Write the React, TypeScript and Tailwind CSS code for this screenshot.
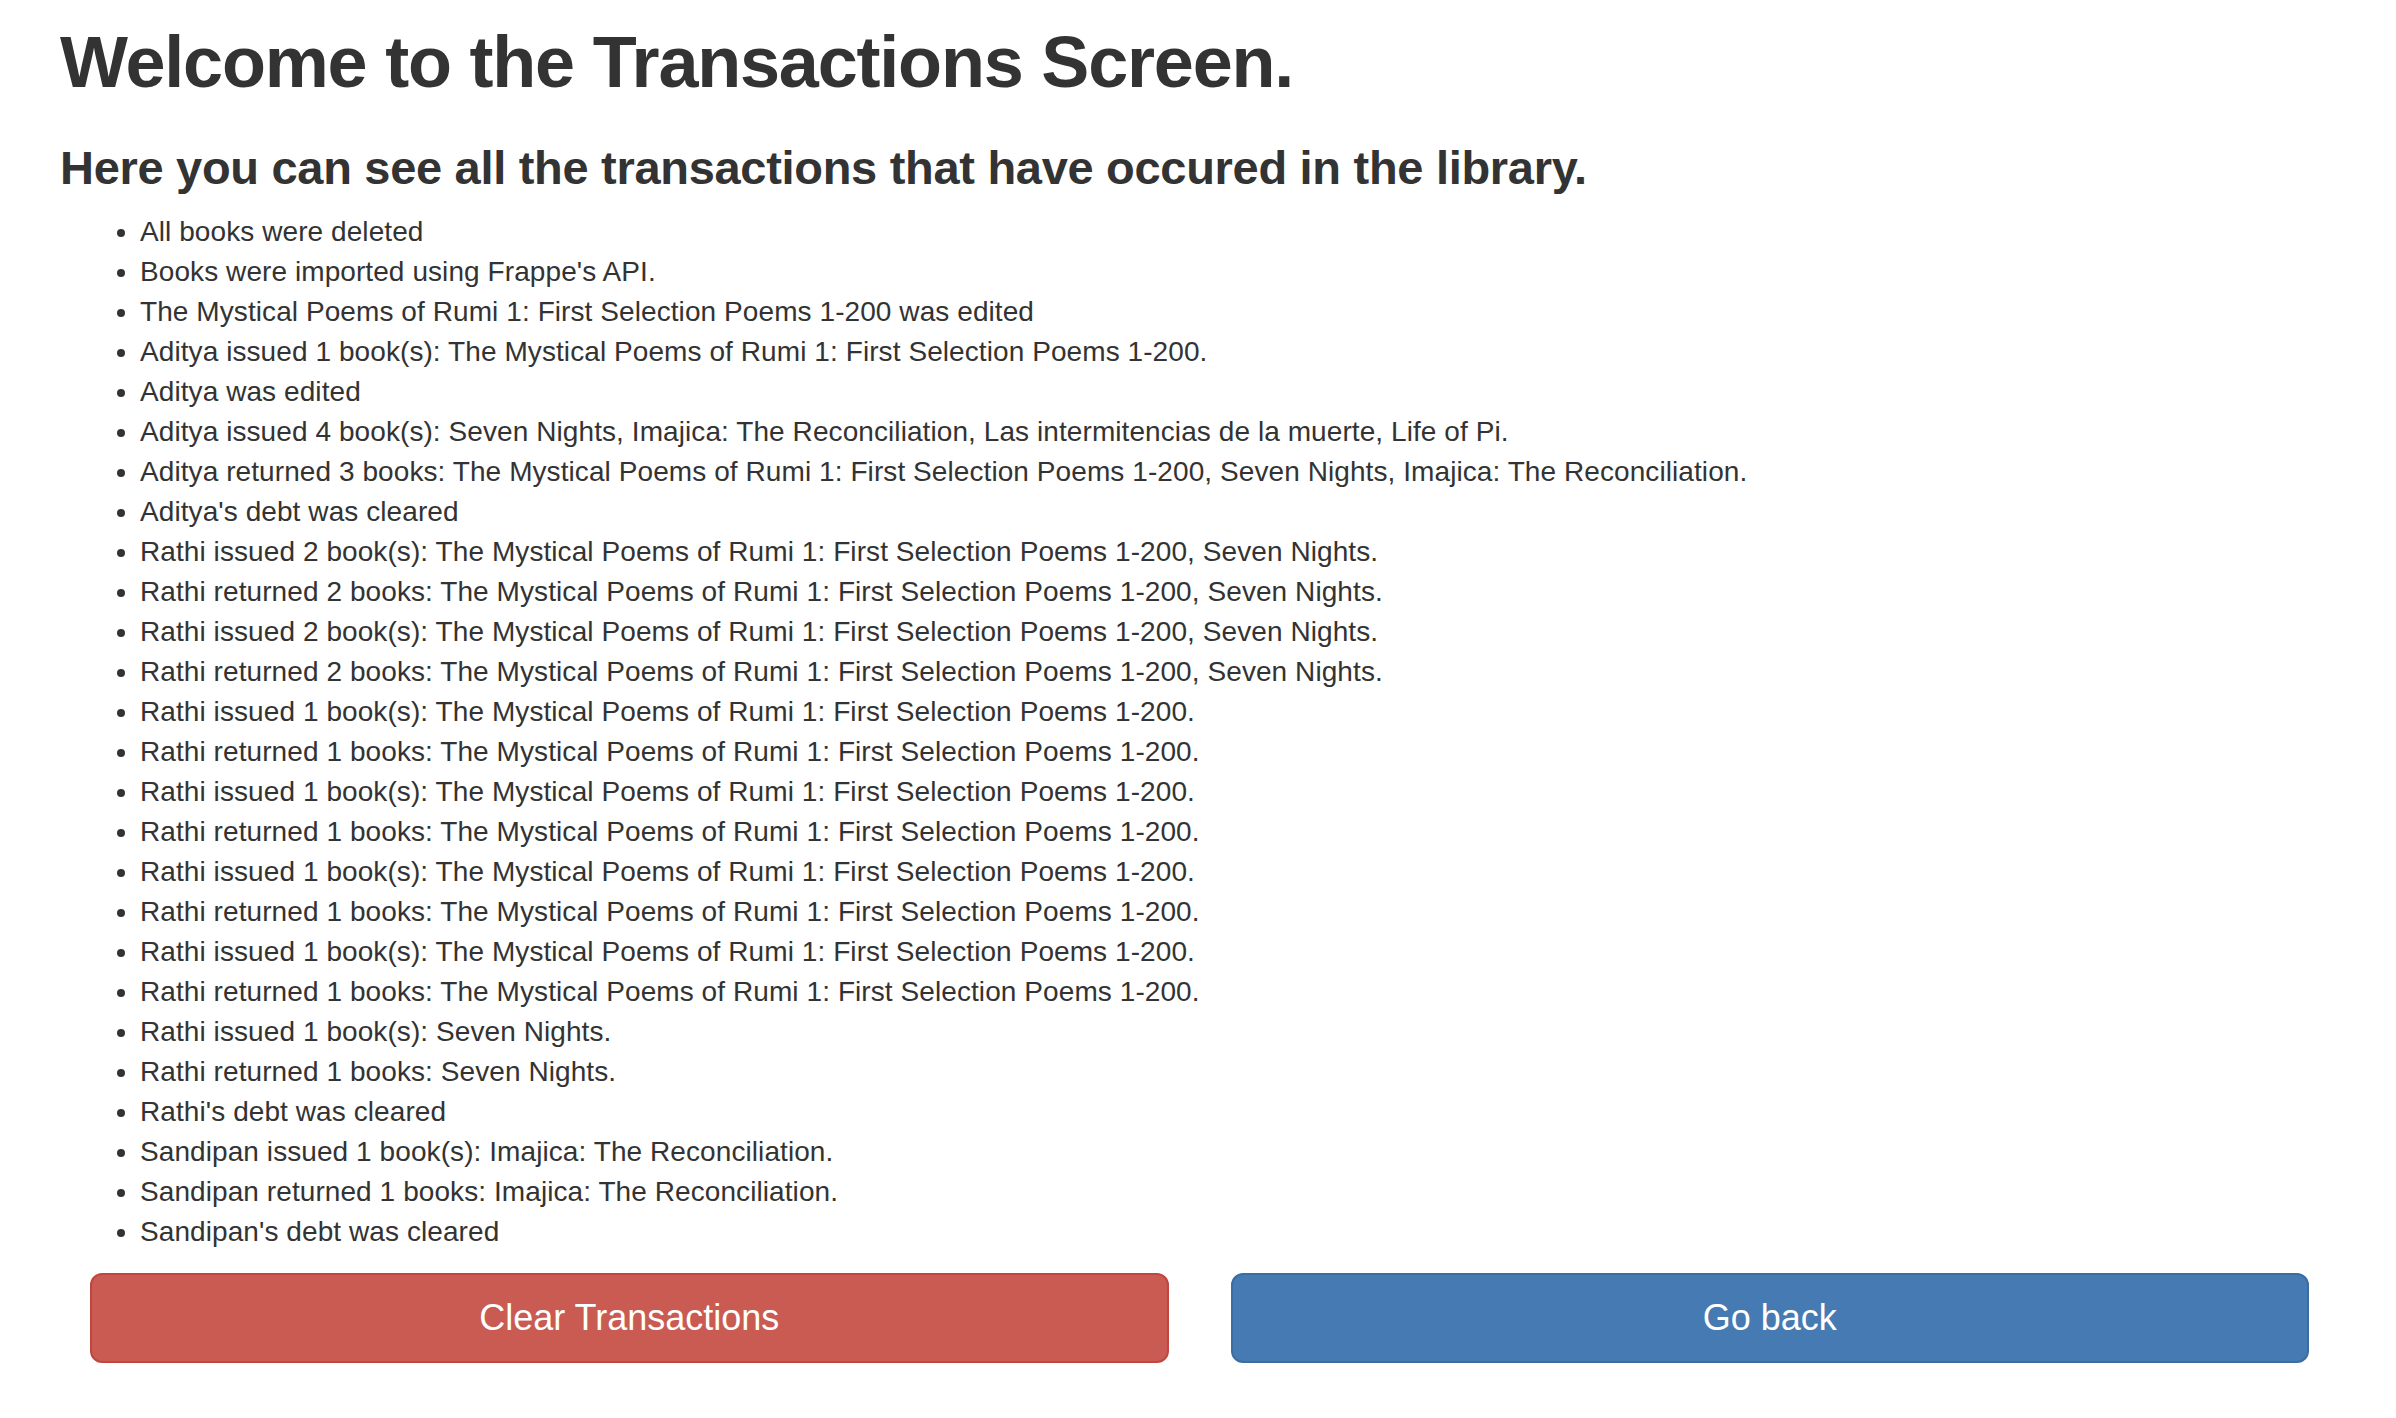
import React from 'react';

const transactions: string[] = [
  'All books were deleted',
  "Books were imported using Frappe's API.",
  'The Mystical Poems of Rumi 1: First Selection Poems 1-200 was edited',
  'Aditya issued 1 book(s): The Mystical Poems of Rumi 1: First Selection Poems 1-200.',
  'Aditya was edited',
  'Aditya issued 4 book(s): Seven Nights, Imajica: The Reconciliation, Las intermitencias de la muerte, Life of Pi.',
  'Aditya returned 3 books: The Mystical Poems of Rumi 1: First Selection Poems 1-200, Seven Nights, Imajica: The Reconciliation.',
  "Aditya's debt was cleared",
  'Rathi issued 2 book(s): The Mystical Poems of Rumi 1: First Selection Poems 1-200, Seven Nights.',
  'Rathi returned 2 books: The Mystical Poems of Rumi 1: First Selection Poems 1-200, Seven Nights.',
  'Rathi issued 2 book(s): The Mystical Poems of Rumi 1: First Selection Poems 1-200, Seven Nights.',
  'Rathi returned 2 books: The Mystical Poems of Rumi 1: First Selection Poems 1-200, Seven Nights.',
  'Rathi issued 1 book(s): The Mystical Poems of Rumi 1: First Selection Poems 1-200.',
  'Rathi returned 1 books: The Mystical Poems of Rumi 1: First Selection Poems 1-200.',
  'Rathi issued 1 book(s): The Mystical Poems of Rumi 1: First Selection Poems 1-200.',
  'Rathi returned 1 books: The Mystical Poems of Rumi 1: First Selection Poems 1-200.',
  'Rathi issued 1 book(s): The Mystical Poems of Rumi 1: First Selection Poems 1-200.',
  'Rathi returned 1 books: The Mystical Poems of Rumi 1: First Selection Poems 1-200.',
  'Rathi issued 1 book(s): The Mystical Poems of Rumi 1: First Selection Poems 1-200.',
  'Rathi returned 1 books: The Mystical Poems of Rumi 1: First Selection Poems 1-200.',
  'Rathi issued 1 book(s): Seven Nights.',
  'Rathi returned 1 books: Seven Nights.',
  "Rathi's debt was cleared",
  'Sandipan issued 1 book(s): Imajica: The Reconciliation.',
  'Sandipan returned 1 books: Imajica: The Reconciliation.',
  "Sandipan's debt was cleared",
];

const TransactionsPage: React.FC = () => {
  const handleClear = () => {};
  const handleBack = () => {};

  return (
    <div className="min-h-screen bg-white px-[60px] text-[#333] font-['Liberation_Sans',Arial,sans-serif]">
      <h1 className="pt-[22px] text-[72px] leading-[80px] font-bold tracking-[-1.2px]">
        Welcome to the Transactions Screen.
      </h1>
      <h3 className="mt-[39px] text-[47px] leading-[53px] font-bold tracking-[-0.3px]">
        Here you can see all the transactions that have occured in the library.
      </h3>

      <ul className="mt-[18px] list-disc pl-[80px] text-[28px] leading-[40px] tracking-[0.08px]">
        {transactions.map((t, i) => (
          <li key={i}>{t}</li>
        ))}
      </ul>

      <div className="mt-[21px] ml-[30px] mr-[27px] grid grid-cols-2 gap-[62px]">
        <button
          onClick={handleClear}
          className="h-[90px] rounded-[12px] border-2 border-[#c2463f] bg-[#c95b53] text-[36px] text-white"
        >
          Clear Transactions
        </button>
        <button
          onClick={handleBack}
          className="h-[90px] rounded-[12px] border-2 border-[#3b6ca2] bg-[#467ab3] text-[36px] text-white"
        >
          Go back
        </button>
      </div>
    </div>
  );
};

export default function App() {
  return <TransactionsPage />;
}
